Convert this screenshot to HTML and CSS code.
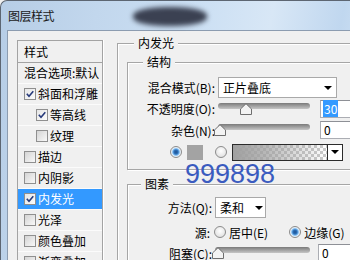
FILE: index.html
```html
<!DOCTYPE html>
<html lang="zh-CN">
<head>
    <meta charset="UTF-8">
    <title>图层样式</title>
    <link rel="stylesheet" href="styles.css">
</head>
<body>
    <div class="window">
        <div class="titlebar">
            <span class="title">图层样式</span>
            <span class="smudge"></span>
        </div>

        <div class="client">
            <div class="style-list">
                <div class="list-head">样式</div>
                <div class="list-item blend">混合选项:默认</div>
                <div class="list-item"><span class="check on"><svg width="10" height="10" viewBox="0 0 10 10"><path d="M1.8 4.8L4 7.2L8.3 2.3" fill="none" stroke="#26397a" stroke-width="1.6"/></svg></span>斜面和浮雕</div>
                <div class="list-item sub"><span class="check on"><svg width="10" height="10" viewBox="0 0 10 10"><path d="M1.8 4.8L4 7.2L8.3 2.3" fill="none" stroke="#26397a" stroke-width="1.6"/></svg></span>等高线</div>
                <div class="list-item sub"><span class="check"></span>纹理</div>
                <div class="list-item"><span class="check"></span>描边</div>
                <div class="list-item"><span class="check"></span>内阴影</div>
                <div class="list-item active"><span class="check on"><svg width="10" height="10" viewBox="0 0 10 10"><path d="M1.8 4.8L4 7.2L8.3 2.3" fill="none" stroke="#26397a" stroke-width="1.6"/></svg></span>内发光</div>
                <div class="list-item"><span class="check"></span>光泽</div>
                <div class="list-item"><span class="check"></span>颜色叠加</div>
                <div class="list-item"><span class="check"></span>渐变叠加</div>
            </div>

            <fieldset class="group outer">
                <legend>内发光</legend>

                <fieldset class="group inner structure">
                    <legend>结构</legend>
                    <div class="field">
                        <label class="field-label">混合模式(B):</label>
                        <div class="combo combo-mode"><span>正片叠底</span><i class="arrow"></i></div>
                    </div>
                    <div class="field">
                        <label class="field-label">不透明度(O):</label>
                        <div class="slider">
                            <span class="thumb" style="left: 22px"><svg width="12" height="12" viewBox="0 0 12 12"><path d="M0.5 11.5V6L6 0.7L11.5 6V11.5Z" fill="#f3f3f3" stroke="#6e6e6e"/></svg></span>
                        </div>
                        <div class="num"><span class="selected">30</span></div>
                    </div>
                    <div class="field">
                        <label class="field-label">杂色(N):</label>
                        <div class="slider">
                            <span class="thumb" style="left: -4px"><svg width="12" height="12" viewBox="0 0 12 12"><path d="M0.5 11.5V6L6 0.7L11.5 6V11.5Z" fill="#f3f3f3" stroke="#6e6e6e"/></svg></span>
                        </div>
                        <div class="num">0</div>
                    </div>
                    <div class="field color-row">
                        <span class="radio on"></span>
                        <span class="swatch"></span>
                        <span class="radio"></span>
                        <div class="gradient-pick">
                            <span class="grad"></span>
                            <span class="grad-btn"><i class="arrow"></i></span>
                        </div>
                    </div>
                </fieldset>

                <fieldset class="group inner elements">
                    <legend>图素</legend>
                    <div class="field">
                        <label class="field-label">方法(Q):</label>
                        <div class="combo combo-method"><span>柔和</span><i class="arrow"></i></div>
                    </div>
                    <div class="field source">
                        <label class="field-label">源:</label>
                        <span class="radio"></span>
                        <span class="radio-text">居中(E)</span>
                        <span class="radio on edge"></span>
                        <span class="radio-text">边缘(G)</span>
                    </div>
                    <div class="field choke">
                        <label class="field-label">阻塞(C):</label>
                        <div class="slider wide">
                            <span class="thumb" style="left: -3px"><svg width="12" height="12" viewBox="0 0 12 12"><path d="M0.5 11.5V6L6 0.7L11.5 6V11.5Z" fill="#f3f3f3" stroke="#6e6e6e"/></svg></span>
                        </div>
                        <div class="num">0</div>
                    </div>
                </fieldset>
            </fieldset>
        </div>

        <div class="watermark">999898</div>
    </div>
</body>
</html>
```

FILE: styles.css
```css
body {
    margin: 0;
    font-family: "Noto Sans CJK SC", "Microsoft YaHei", sans-serif;
    font-size: 12px;
    color: #000;
    background: #f0f0f0;
    overflow: hidden;
}
.window {
    position: relative;
    width: 390px;
    height: 290px;
    border-top: 1px solid #5d6672;
    border-left: 1px solid #5d6672;
    border-radius: 7px 0 0 0;
    background: linear-gradient(100deg, #b6cde6 0%, #c2d7ed 22%, #cbdff3 45%, #d8e7f6 62%, #c0d7ef 78%, #d0e2f4 86%, #bad3ed 100%);
}
.titlebar {
    position: relative;
    height: 29px;
    padding-left: 7px;
    display: flex;
    align-items: center;
}
.title {
    font-size: 12px;
    line-height: 16px;
    letter-spacing: -0.5px;
    color: #1a1a1a;
}
.smudge {
    position: absolute;
    left: 132px;
    top: 6px;
    width: 74px;
    height: 19px;
    border-radius: 45%;
    background: #3b4152;
    filter: blur(2.5px);
}
.client {
    margin-left: 6px;
    height: 300px;
    padding: 4px 0 0 9px;
    display: flex;
    align-items: flex-start;
    border: 1px solid #8c9cb0;
    background: #f0f0f0;
}

/* left style list */
.style-list {
    width: 86px;
    margin-top: 5px;
    box-sizing: border-box;
    border: 1px solid #a3a3a3;
    box-shadow: 1px 0 0 #fff;
    flex-shrink: 0;
}
.list-head {
    height: 22px;
    line-height: 21px;
    padding-left: 6px;
    border-bottom: 1px solid #a3a3a3;
    box-sizing: border-box;
}
.list-item {
    height: 21px;
    line-height: 20px;
    padding-left: 6px;
    display: flex;
    align-items: center;
    white-space: nowrap;
    overflow: hidden;
    border-bottom: 1px solid #fbfbfb;
    box-sizing: border-box;
}
.list-item.sub {
    padding-left: 18px;
}
.list-item.active {
    background: #3399ff;
    color: #fff;
}
.check {
    width: 12px;
    height: 12px;
    margin-right: 2px;
    box-sizing: border-box;
    border: 1px solid #8f8f8f;
    background: linear-gradient(135deg, #d4d4d4, #f8f8f8);
    display: inline-flex;
    align-items: center;
    justify-content: center;
    flex-shrink: 0;
}
.check.on {
    background: linear-gradient(135deg, #e6e6e6, #fbfbfb);
}

/* group boxes */
.group {
    margin: 0;
    padding: 0;
    min-width: 0;
    border: 1px solid #a6a6a6;
    box-shadow: inset 1px 1px 0 #fff, 1px 1px 0 #fff;
}
.group legend {
    padding: 0 4px;
    line-height: 16px;
    background: #f0f0f0;
}
.outer {
    width: 262px;
    margin-left: 14px;
    padding: 3px 0 0 9px;
}
.outer > legend {
    margin-left: 7px;
}
.inner {
    margin-right: -14px;
}
.structure {
    padding: 7px 0 6px;
}
.structure > legend {
    margin-left: 15px;
}
.elements {
    margin-top: 6px;
    padding: 5px 0 8px;
}
.elements > legend {
    margin-left: 13px;
}

/* rows */
.field {
    height: 21px;
    display: flex;
    align-items: center;
    white-space: nowrap;
}
.structure .field:nth-of-type(n+3) {
    height: 22px;
}
.field-label {
    width: 87px;
    margin-right: 3px;
    text-align: right;
    flex-shrink: 0;
}
.elements .field-label {
    width: 84px;
}
.field.source {
    height: 22px;
    margin-top: 3px;
}
.field.source .field-label {
    width: 82px;
    margin-right: 4px;
}
.field.choke {
    height: 18px;
    margin-top: 1px;
}

.combo {
    height: 21px;
    box-sizing: border-box;
    border: 1px solid #a9a9a9;
    background: #fff;
    padding: 0 4px;
    display: flex;
    align-items: center;
}
.combo .arrow {
    margin-left: auto;
}
.combo-mode {
    width: 119px;
}
.combo-method {
    width: 51px;
    padding-right: 2px;
}
.arrow {
    width: 0;
    height: 0;
    border-left: 4px solid transparent;
    border-right: 4px solid transparent;
    border-top: 4px solid #000;
}

.slider {
    position: relative;
    width: 92px;
    height: 12px;
    flex-shrink: 0;
}
.slider.wide {
    width: 95px;
}
.slider::before {
    content: "";
    position: absolute;
    left: 0;
    right: 0;
    top: 0;
    height: 6px;
    border-radius: 3px;
    background: linear-gradient(#7a7a7a, #c6c6c6);
}
.thumb {
    position: absolute;
    top: 0;
    line-height: 0;
}

.num {
    width: 40px;
    height: 18px;
    margin-left: 10px;
    box-sizing: border-box;
    border: 1px solid #abadb3;
    border-top-color: #8e9096;
    background: #fff;
    padding-left: 3px;
    line-height: 16px;
}
.choke .num {
    margin-left: 8px;
}
.selected {
    background: #3399ff;
    color: #fff;
    padding: 0 1px;
    margin-left: -1px;
}

.radio {
    width: 12px;
    height: 12px;
    box-sizing: border-box;
    border-radius: 50%;
    border: 1px solid #8b8b8b;
    background: radial-gradient(circle at 50% 40%, #ffffff, #d9d9d9);
    flex-shrink: 0;
}
.radio.on {
    background: radial-gradient(circle, #1d4f8e 0, #2c6fb8 2px, #71b3ee 3.2px, #d8ebfb 4.2px, #f2f2f2 5px);
}
.radio-text {
    margin-left: 3px;
}
.radio.edge {
    margin-left: 21px;
}

.color-row .radio:first-child {
    margin-left: 42px;
}
.swatch {
    width: 16px;
    height: 15px;
    margin-left: 5px;
    background: #a3a3a3;
}
.swatch + .radio {
    margin-left: 12px;
}
.gradient-pick {
    width: 111px;
    height: 17px;
    margin-left: 5px;
    box-sizing: border-box;
    border: 1px solid #2b2b2b;
    display: flex;
}
.grad {
    flex: 1;
    background:
        linear-gradient(to right, #a0a0a0 0%, rgba(160, 160, 160, 0.75) 35%, rgba(160, 160, 160, 0) 100%),
        repeating-conic-gradient(#c9c9c9 0 25%, #fff 0 50%) 0 0 / 6px 6px;
}
.grad-btn {
    width: 14px;
    border-left: 1px solid #2b2b2b;
    background: #fff;
    display: flex;
    align-items: center;
    justify-content: center;
}

.watermark {
    position: absolute;
    left: 184px;
    top: 160px;
    font-family: "Liberation Sans", Arial, sans-serif;
    font-size: 27px;
    line-height: 27px;
    color: #3a5bbf;
}
```
